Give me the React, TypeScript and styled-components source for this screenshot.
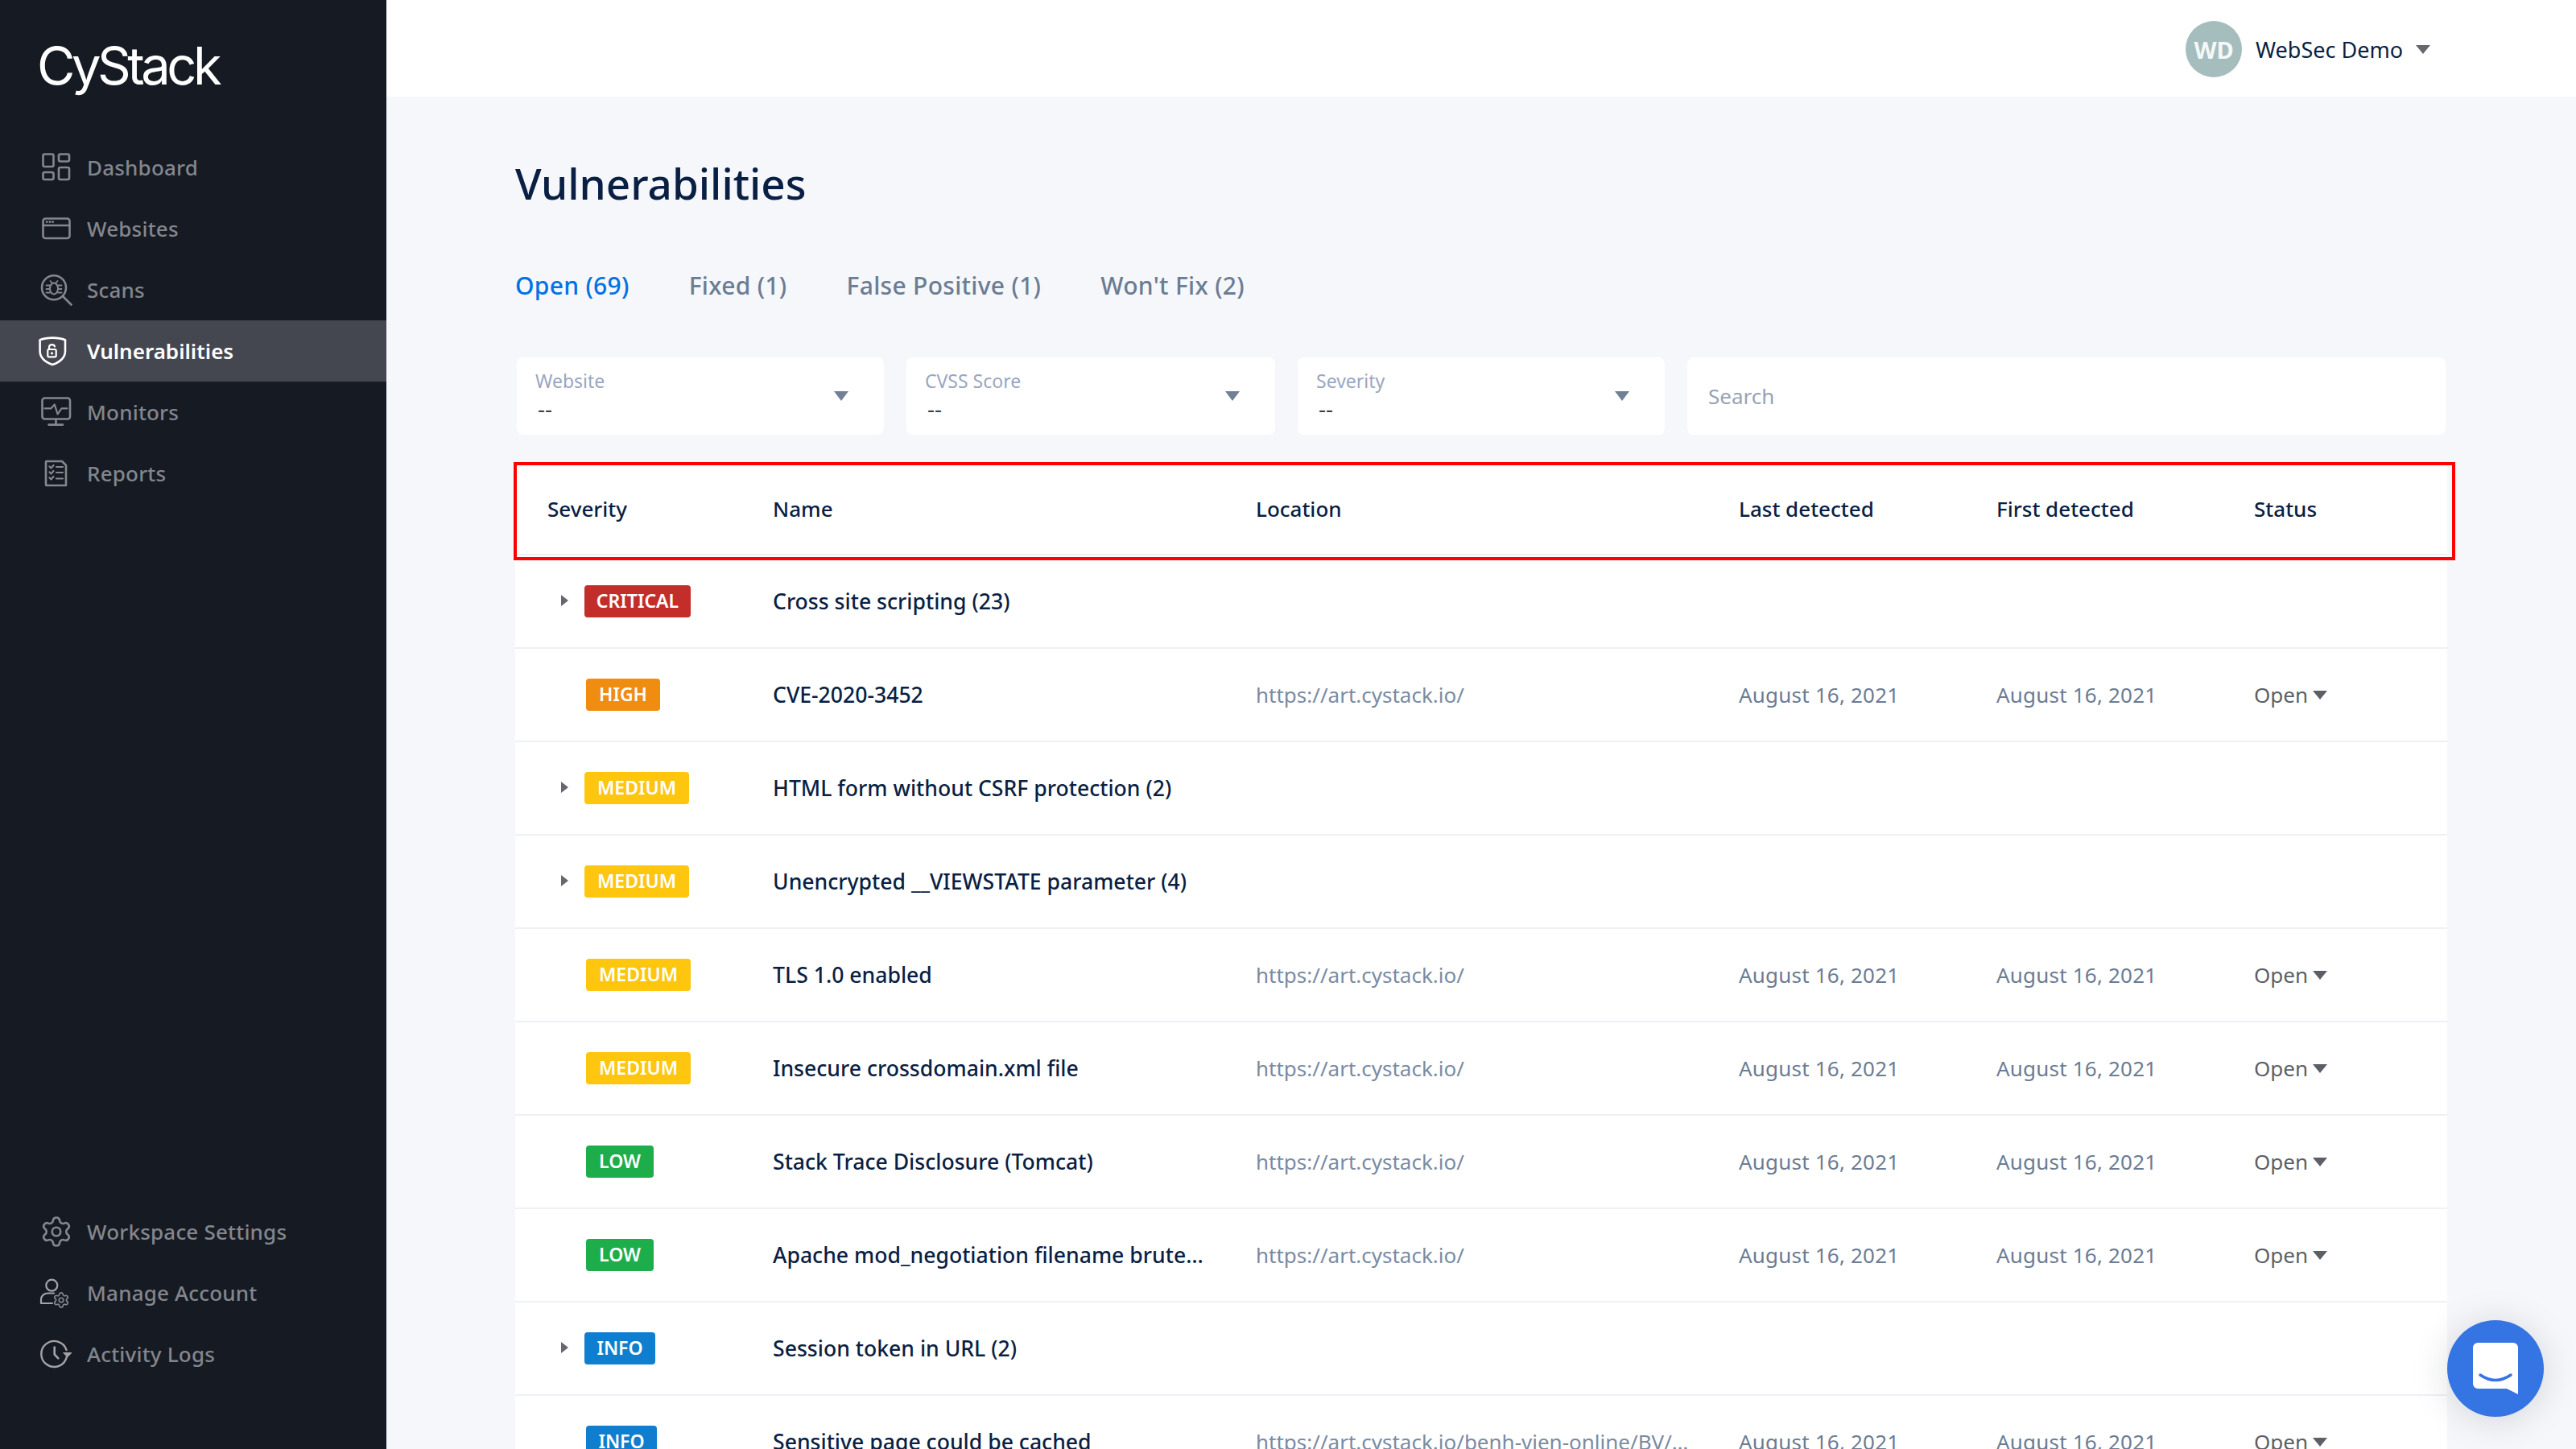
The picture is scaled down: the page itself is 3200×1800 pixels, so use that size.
import React from "react";
import styled, { createGlobalStyle } from "styled-components";
import { Settings } from "lucide-react";

const Global = createGlobalStyle`
  * { box-sizing: border-box; }
  html, body { margin: 0; padding: 0; background: #f5f7fa; }
  body { font-family: "Noto Sans", "Open Sans", sans-serif; }
`;

const Shell = styled.div`
  display: flex;
  width: 3200px;
  height: 1800px;
  overflow: hidden;
  position: relative;
`;

const Sidebar = styled.aside`
  width: 480px;
  flex: none;
  background: #161a23;
  display: flex;
  flex-direction: column;
  padding-bottom: 80px;
`;

const Logo = styled.div`
  height: 170px;
  padding: 34px 0 0 46px;
  color: #fff;
  font-family: "Inter", sans-serif;
  font-size: 65px;
  font-weight: 400;
  letter-spacing: -4.5px;
  line-height: 96px;
`;

const Nav = styled.nav`
  display: flex;
  flex-direction: column;
`;

const Spacer = styled.div`
  flex: 1;
`;

const NavItem = styled.a<{ $active?: boolean }>`
  display: flex;
  align-items: center;
  height: 76px;
  padding-left: 46px;
  gap: 14px;
  font-size: 26px;
  font-weight: ${(p) => (p.$active ? 600 : 500)};
  letter-spacing: ${(p) => (p.$active ? 0 : 0.2)}px;
  color: ${(p) => (p.$active ? "#ffffff" : "#83868d")};
  background: ${(p) => (p.$active ? "#454750" : "transparent")};
  svg { flex: none; }
`;

const NavIcon = styled.svg.attrs({ width: 48, height: 48, viewBox: "0 0 48 48", fill: "none" })<{ $light?: boolean }>`
  stroke: ${(p) => (p.$light ? "#a2a3a7" : "#85878d")};
  stroke-width: 2.6;
  stroke-linecap: round;
  stroke-linejoin: round;
`;

const Main = styled.main`
  flex: 1;
  min-width: 0;
  display: flex;
  flex-direction: column;
`;

const TopBar = styled.header`
  height: 120px;
  flex: none;
  background: #fff;
  display: flex;
  align-items: center;
  justify-content: flex-end;
  padding: 2px 181px 0 0;
  gap: 16px;
`;

const Avatar = styled.div`
  width: 70px;
  height: 70px;
  margin-right: 1px;
  border-radius: 50%;
  background: #a5bdbd;
  color: #f4f8f8;
  display: flex;
  align-items: center;
  justify-content: center;
  font-size: 29px;
  font-weight: 700;
`;

const UserName = styled.span`
  font-size: 27px;
  color: #0a1f44;
`;

const Triangle = styled.span<{ $w: number; $h: number; $color: string }>`
  display: inline-block;
  flex: none;
  width: 0;
  height: 0;
  border-left: ${(p) => p.$w / 2}px solid transparent;
  border-right: ${(p) => p.$w / 2}px solid transparent;
  border-top: ${(p) => p.$h}px solid ${(p) => p.$color};
`;

const Content = styled.div`
  padding: 70px 160px 0;
  display: flex;
  flex-direction: column;
`;

const Title = styled.h1`
  margin: 0;
  font-size: 53px;
  font-weight: 500;
  line-height: 76px;
  color: #0a1f44;
`;

const Tabs = styled.div`
  display: flex;
  gap: 74px;
  margin-top: 66px;
`;

const Tab = styled.span<{ $active?: boolean }>`
  font-size: 30px;
  font-weight: 500;
  letter-spacing: 0.3px;
  line-height: 46px;
  color: ${(p) => (p.$active ? "#0072e5" : "#6b7c93")};
`;

const Filters = styled.div`
  display: grid;
  grid-template-columns: 456px 458px 456px 1fr;
  gap: 28px;
  margin: 66px 2px 0;
`;

const Select = styled.div`
  height: 96px;
  background: #fff;
  border-radius: 8px;
  padding: 0 44px 0 23px;
  display: flex;
  align-items: center;
  justify-content: space-between;
`;

const SelectText = styled.div`
  display: flex;
  flex-direction: column;
  align-self: flex-start;
  padding-top: 14px;
`;

const SelectLabel = styled.span`
  font-size: 23px;
  line-height: 30px;
  color: #9aa6bf;
`;

const SelectValue = styled.span`
  font-size: 28px;
  line-height: 38px;
  margin-left: 3px;
  color: #3a3f4a;
`;

const SearchBox = styled.div`
  height: 96px;
  background: #fff;
  border-radius: 8px;
  padding-left: 26px;
  display: flex;
  align-items: center;
  font-size: 26px;
  color: #97a3b4;
`;

const Table = styled.section`
  margin-top: 36px;
  background: #fff;
`;

const Row = styled.div<{ $head?: boolean }>`
  display: grid;
  grid-template-columns: 320px 600px 600px 320px 320px 240px;
  align-items: center;
  height: ${(p) => (p.$head ? 114 : 116)}px;
  border-bottom: 2px solid #edf0f5;
  position: relative;
`;

const RedFrame = styled.div`
  position: absolute;
  top: -2px;
  left: -2px;
  right: -10px;
  bottom: -8px;
  border: 4px solid #f00;
  pointer-events: none;
`;

const HeadCell = styled.div<{ $first?: boolean }>`
  font-size: 26px;
  font-weight: 500;
  color: #0a1f44;
  padding-left: ${(p) => (p.$first ? 40 : 0)}px;
`;

const SeverityCell = styled.div<{ $expandable?: boolean }>`
  display: flex;
  align-items: center;
  padding-left: ${(p) => (p.$expandable ? 57 : 88)}px;
`;

const Expander = styled.span`
  width: 0;
  height: 0;
  margin-right: 20px;
  margin-top: -2px;
  border-top: 7px solid transparent;
  border-bottom: 7px solid transparent;
  border-left: 9px solid #66686d;
`;

const severityStyles: Record<string, { color: string; width: number }> = {
  CRITICAL: { color: "#c32e2b", width: 132 },
  HIGH: { color: "#f08c0f", width: 92 },
  MEDIUM: { color: "#ffc60f", width: 130 },
  LOW: { color: "#1dae4b", width: 84 },
  INFO: { color: "#0f7ecf", width: 88 },
};

const Badge = styled.span<{ $level: string }>`
  display: inline-flex;
  align-items: center;
  justify-content: center;
  height: 40px;
  width: ${(p) => severityStyles[p.$level].width}px;
  border-radius: 4px;
  background: ${(p) => severityStyles[p.$level].color};
  color: #fff;
  font-size: 23px;
  font-weight: 600;
  padding-bottom: 2px;
`;

const NameCell = styled.div`
  font-size: 26.6px;
  font-weight: 500;
  color: #0a1f44;
  padding-right: 56px;
  white-space: nowrap;
  overflow: hidden;
  text-overflow: ellipsis;
`;

const LocationCell = styled.div`
  font-size: 26px;
  color: #7a8ba3;
  padding-right: 60px;
  white-space: nowrap;
  overflow: hidden;
  text-overflow: ellipsis;
`;

const DateCell = styled.div`
  font-size: 26px;
  letter-spacing: 0.2px;
  color: #6b7c93;
`;

const StatusCell = styled.div`
  display: flex;
  align-items: center;
  gap: 6px;
  font-size: 26px;
  color: #5c5f66;
`;

const ChatButton = styled.button`
  position: absolute;
  right: 40px;
  bottom: 40px;
  width: 120px;
  height: 120px;
  border: 0;
  padding: 0;
  border-radius: 50%;
  background: #3574e3;
  box-shadow: 0 4px 48px rgba(0, 0, 0, 0.14);
  display: flex;
`;

const DashboardIcon = () => (
  <NavIcon>
    <rect x="7.5" y="7.5" width="13" height="15.5" rx="2" />
    <rect x="27" y="7.5" width="13" height="9" rx="2" />
    <rect x="7.5" y="30" width="13" height="9" rx="2" />
    <rect x="27" y="24" width="13" height="15" rx="2" />
  </NavIcon>
);

const WebsitesIcon = () => (
  <NavIcon>
    <rect x="7.5" y="11.5" width="33" height="24.5" rx="3" />
    <path d="M7.5 20H40.5" />
    <path d="M12 15.6h.4M15.8 15.6h.4M19.4 15.6h.4" />
  </NavIcon>
);

const ScansIcon = () => (
  <NavIcon>
    <circle cx="21" cy="21.3" r="15" />
    <path d="M32 32L42.5 42.5" />
    <ellipse cx="21" cy="22.5" rx="5" ry="7" strokeWidth="2" />
    <path
      d="M16.5 13l2.5 3M25.5 13l-2.5 3M11.5 18.5h4.5M11.5 23h4.5M11.5 27.5h4.5M30.5 18.5h-4.5M30.5 23h-4.5M30.5 27.5h-4.5"
      strokeWidth="1.8"
    />
  </NavIcon>
);

const VulnIcon = () => (
  <NavIcon style={{ stroke: "#fff" }}>
    <path d="M19.3 7.6C26 7.6 31 8.6 35 10.2V24C35 33 27 38.3 19.3 41C11.5 38.3 3.6 33 3.6 24V10.2C7.6 8.6 12.6 7.6 19.3 7.6Z" />
    <rect x="13.3" y="22" width="10.4" height="9.4" rx="1.6" strokeWidth="2.2" />
    <path d="M15 22V19.5C15 15.5 21 15 22 18.5" strokeWidth="2.2" />
    <circle cx="18.5" cy="26.8" r="0.7" strokeWidth="1.8" />
  </NavIcon>
);

const MonitorIcon = () => (
  <NavIcon>
    <rect x="6.5" y="6.5" width="34.5" height="26" rx="3" />
    <path d="M23.5 33V39M14.5 39.6H32" />
    <path d="M9.5 19.3H17.5L21.8 14.5L25.6 26.5L30.5 19.3H37.5" strokeWidth="2.2" />
  </NavIcon>
);

const ReportsIcon = () => (
  <NavIcon>
    <path d="M11.5 9H31L36 14V39H11.5C11 39 11 38.6 11 38V10C11 9.4 11 9 11.5 9Z" />
    <path
      d="M15.5 15.5L17.5 17.5L20.5 14M15.5 22.5L17.5 24.5L20.5 21M15.5 29.5L17.5 31.5L20.5 28M24 16H32M24 23H32M24 30.5H32"
      strokeWidth="2.2"
    />
  </NavIcon>
);

const WorkspaceIcon = () => (
  <NavIcon $light>
    <Settings x={3} y={3} size={42} strokeWidth={1.5} />
  </NavIcon>
);

const AccountIcon = () => (
  <NavIcon $light>
    <circle cx="18.3" cy="14.7" r="7" strokeWidth="2.2" />
    <path d="M19 37H5V32.5C5 27.5 9 24.5 13.5 24.5H21" strokeWidth="2.2" />
    <Settings x={19} y={22} size={22} strokeWidth={1.9} />
  </NavIcon>
);

const ActivityIcon = () => (
  <NavIcon $light>
    <path d="M37 27A16 16 0 1 1 36.5 19" strokeWidth="2.4" />
    <path d="M21.7 15.5V24.5L26.3 29.3" strokeWidth="2.6" />
    <path d="M33 22.5H43L38 27.5Z" fill="#a2a3a7" strokeWidth="1" />
  </NavIcon>
);

const topNav = [
  { label: "Dashboard", icon: <DashboardIcon /> },
  { label: "Websites", icon: <WebsitesIcon /> },
  { label: "Scans", icon: <ScansIcon /> },
  { label: "Vulnerabilities", icon: <VulnIcon />, active: true },
  { label: "Monitors", icon: <MonitorIcon /> },
  { label: "Reports", icon: <ReportsIcon /> },
];

const bottomNav = [
  { label: "Workspace Settings", icon: <WorkspaceIcon /> },
  { label: "Manage Account", icon: <AccountIcon /> },
  { label: "Activity Logs", icon: <ActivityIcon /> },
];

const columns = ["Severity", "Name", "Location", "Last detected", "First detected", "Status"];

const SITE = "https://art.cystack.io/";
const DAY = "August 16, 2021";

type Item = { level: string; name: string; location?: string };

const rows: Item[] = [
  { level: "CRITICAL", name: "Cross site scripting (23)" },
  { level: "HIGH", name: "CVE-2020-3452", location: SITE },
  { level: "MEDIUM", name: "HTML form without CSRF protection (2)" },
  { level: "MEDIUM", name: "Unencrypted __VIEWSTATE parameter (4)" },
  { level: "MEDIUM", name: "TLS 1.0 enabled", location: SITE },
  { level: "MEDIUM", name: "Insecure crossdomain.xml file", location: SITE },
  { level: "LOW", name: "Stack Trace Disclosure (Tomcat)", location: SITE },
  { level: "LOW", name: "Apache mod_negotiation filename bruteforcing", location: SITE },
  { level: "INFO", name: "Session token in URL (2)" },
  { level: "INFO", name: "Sensitive page could be cached", location: "https://art.cystack.io/benh-vien-online/BV/index.aspx" },
];

export default function App() {
  return (
    <Shell>
      <Global />
      <Sidebar>
        <Logo>CyStack</Logo>
        <Nav>
          {topNav.map((n) => (
            <NavItem key={n.label} $active={n.active}>
              {n.icon}
              {n.label}
            </NavItem>
          ))}
        </Nav>
        <Spacer />
        <Nav>
          {bottomNav.map((n) => (
            <NavItem key={n.label}>
              {n.icon}
              {n.label}
            </NavItem>
          ))}
        </Nav>
      </Sidebar>
      <Main>
        <TopBar>
          <Avatar>WD</Avatar>
          <UserName>WebSec Demo</UserName>
          <Triangle $w={18} $h={11} $color="#66686d" />
        </TopBar>
        <Content>
          <Title>Vulnerabilities</Title>
          <Tabs>
            <Tab $active>Open (69)</Tab>
            <Tab>Fixed (1)</Tab>
            <Tab>False Positive (1)</Tab>
            <Tab>Won't Fix (2)</Tab>
          </Tabs>
          <Filters>
            {["Website", "CVSS Score", "Severity"].map((f) => (
              <Select key={f}>
                <SelectText>
                  <SelectLabel>{f}</SelectLabel>
                  <SelectValue>--</SelectValue>
                </SelectText>
                <Triangle $w={19} $h={12} $color="#718096" />
              </Select>
            ))}
            <SearchBox>Search</SearchBox>
          </Filters>
          <Table>
            <Row $head>
              {columns.map((c, i) => (
                <HeadCell key={c} $first={i === 0}>
                  {c}
                </HeadCell>
              ))}
              <RedFrame />
            </Row>
            {rows.map((r) => (
              <Row key={r.name}>
                <SeverityCell $expandable={!r.location}>
                  {!r.location && <Expander />}
                  <Badge $level={r.level}>{r.level}</Badge>
                </SeverityCell>
                <NameCell>{r.name}</NameCell>
                {r.location && (
                  <>
                    <LocationCell>{r.location}</LocationCell>
                    <DateCell>{DAY}</DateCell>
                    <DateCell>{DAY}</DateCell>
                    <StatusCell>
                      Open
                      <Triangle $w={18} $h={11} $color="#5c5f66" />
                    </StatusCell>
                  </>
                )}
              </Row>
            ))}
          </Table>
        </Content>
      </Main>
      <ChatButton aria-label="Chat">
        <svg width="120" height="120" viewBox="0 0 120 120">
          <path d="M38 28H82a6 6 0 0 1 6 6V92L74 85H38a6 6 0 0 1-6-6V34a6 6 0 0 1 6-6Z" fill="#fff" />
          <path d="M41 68Q60 81 79 68" fill="none" stroke="#3574e3" strokeWidth="3.5" strokeLinecap="round" />
        </svg>
      </ChatButton>
    </Shell>
  );
}
